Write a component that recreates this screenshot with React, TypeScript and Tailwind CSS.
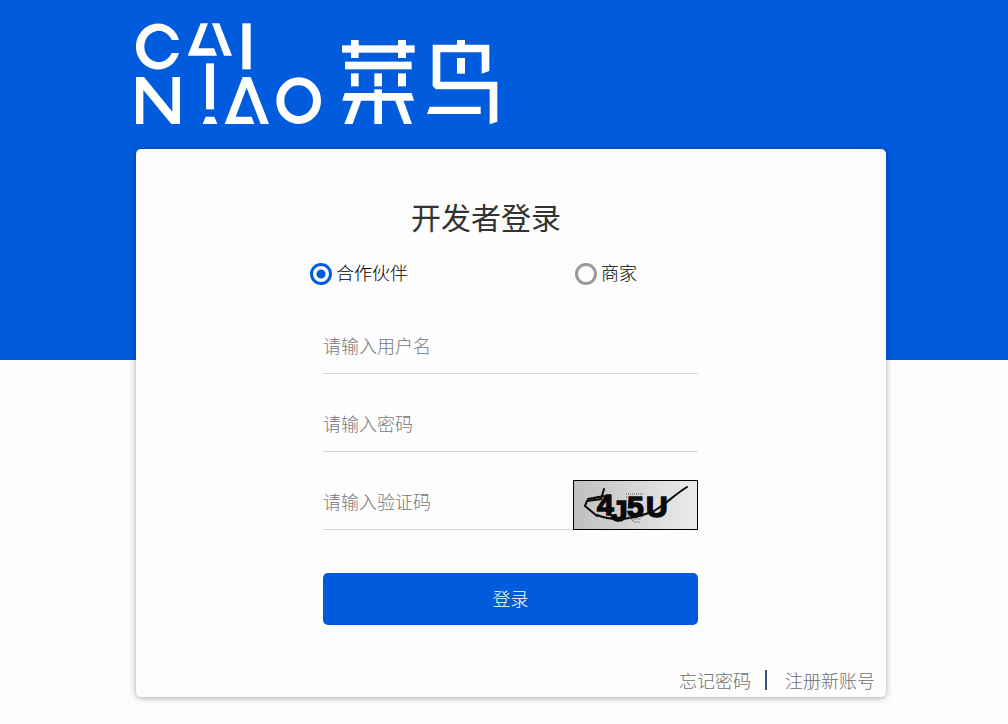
import { useState } from "react";

function CainiaoLogo() {
  return (
    <svg viewBox="30 29 1086 307" className="w-[362px] max-w-full fill-white" role="img" aria-label="菜鸟 CAINIAO">
      {/* Upper row */}
      <path d="M159 83 A66 69 0 1 0 159 122 H137 A43 47 0 1 1 137 83 Z" />
      <path d="M224 33 H246 L217 108 H264 L273 130 H185 Z" />
      <path d="M258 33 H280 L318 130 H294 Z" />
      <rect x="349" y="33" width="25" height="138" />
      {/* Lower row */}
      <path d="M30 335 V194 H54 L139 298 V194 H162 V335 H136 L52 233 V335 Z" />
      <rect x="240" y="153" width="24" height="138" />
      <path d="M239 313 H265 L274 335 H230 Z" />
      <path d="M350 194 H374 L429 335 H404 L362 226 L329 313 H377 L385 335 H296 Z" />
      <ellipse cx="518" cy="265" rx="55" ry="58" fill="none" stroke="white" strokeWidth="24" />
      {/* Right-hand mark */}
      <g transform="translate(600 54)">
        <rect x="48" y="45" width="218" height="22" />
        <rect x="75" y="29" width="23" height="54" />
        <rect x="216" y="29" width="24" height="54" />
        <rect x="57" y="94" width="200" height="23" />
        <rect x="75" y="129" width="23" height="39" />
        <rect x="145" y="129" width="23" height="39" />
        <rect x="216" y="129" width="24" height="39" />
        <path d="M56 188 H257 L264 211 H49 Z" />
        <rect x="145" y="177" width="23" height="104" />
        <path d="M82 210 H106 L80 281 H55 Z" />
        <path d="M207 210 H232 L258 281 H234 Z" />
        <rect x="393" y="29" width="24" height="20" />
        <path d="M320 43 H490 V122 L467 130 V66 H343 V154 H514 V274 L491 282 V177 H330 L320 167 Z" />
        <rect x="393" y="83" width="24" height="47" />
        <path d="M311 229 H464 V251 H303 Z" />
      </g>
    </svg>
  );
}

function Captcha() {
  return (
    <svg viewBox="0 0 123 48" className="block h-full w-full" role="img" aria-label="验证码">
      <defs>
        <linearGradient id="captcha-bg" x1="0" y1="0" x2="1" y2="0">
          <stop offset="0" stopColor="#c0c0c0" />
          <stop offset="1" stopColor="#ebebeb" />
        </linearGradient>
      </defs>
      <rect width="123" height="48" fill="url(#captcha-bg)" />
      <text
        x="23 37 53 72"
        y="34 40 36 36"
        fontFamily="'Liberation Sans Narrow', 'Liberation Sans', sans-serif"
        fontWeight="700"
        fontSize="30"
        fill="#0a0a0a"
        stroke="#0a0a0a"
        strokeWidth="1.5"
      >
        4J5U
      </text>
      <g fill="none" stroke="#0a0a0a" strokeLinecap="round">
        <path d="M30 8 L27 18 L13 20 L11 25 L23 35" strokeWidth="2" />
        <path d="M14 18 L30 15 M23 34 C40 41 60 38 80 30 C92 23 100 14 113 6" strokeWidth="2" />
      </g>
      {/* Grain around the third character */}
      <g fill="none" stroke="#555" strokeWidth="1" strokeDasharray="1 1">
        <path d="M52 13 H70 M52 16 H56 M52 31 L58 38 H66 L71 33 M54 35 L60 41 H66" />
      </g>
    </svg>
  );
}

const ROLES = [
  { value: "partner", label: "合作伙伴" },
  { value: "merchant", label: "商家" },
];

const fieldClass =
  "h-[54px] w-full min-w-0 border-b border-[#d0d2dd] bg-transparent pb-1 text-[#333] outline-none placeholder:text-[#777] placeholder:opacity-100";

export default function App() {
  const [role, setRole] = useState("partner");

  return (
    <main className="min-h-screen bg-[#fdfdfd] bg-[linear-gradient(#005bdd_360px,transparent_360px)] px-4 pt-[22px] pb-6 font-['Noto_Sans_CJK_SC',sans-serif] text-lg font-light text-[#333] md:pr-[122px] md:pl-[136px]">
      <header className="mb-[25px]">
        <a href="#" className="inline-block align-top">
          <CainiaoLogo />
        </a>
      </header>

      <form
        className="rounded-[5px] bg-[#fdfdfd] pt-[47px] pb-[3px] shadow-[0_1px_6px_rgba(0,0,0,0.35)]"
        onSubmit={(e) => e.preventDefault()}
      >
        <h1 className="pr-[50px] text-center text-3xl leading-10 font-normal">开发者登录</h1>

        {/* Account type */}
        <div className="mt-6 grid grid-cols-2 pr-[46px] pl-[174px] text-black">
          {ROLES.map((item) => (
            <label key={item.value} className="flex h-7 items-center gap-1">
              <input
                type="radio"
                name="role"
                value={item.value}
                checked={role === item.value}
                onChange={() => setRole(item.value)}
                className="size-[22px] shrink-0 appearance-none rounded-full border-3 border-[#999] checked:border-[#005bdd] checked:bg-[radial-gradient(circle,#005bdd_4px,transparent_5px)]"
              />
              <span className="pb-1">{item.label}</span>
            </label>
          ))}
        </div>

        <div className="ml-[187px] w-1/2">
          <div className="mt-8 flex flex-col gap-6">
            <input type="text" aria-label="用户名" placeholder="请输入用户名" className={fieldClass} />
            <input type="password" aria-label="密码" placeholder="请输入密码" className={fieldClass} />
            <div className="flex items-end">
              <input type="text" aria-label="验证码" placeholder="请输入验证码" className={fieldClass} />
              <button type="button" className="h-[50px] w-[125px] shrink-0 border border-black">
                <Captcha />
              </button>
            </div>
          </div>

          <button type="submit" className="mt-[43px] h-[52px] w-full rounded-[5px] bg-[#005bdd] pb-0.5 text-white">
            登录
          </button>
        </div>

        <div className="mt-[41px] flex items-center justify-end pr-[11px] text-[#707070]">
          <a href="#">忘记密码</a>
          <span className="mr-[18px] ml-3.5 h-5 w-0.5 bg-[#33557f]" />
          <a href="#">注册新账号</a>
        </div>
      </form>
    </main>
  );
}
